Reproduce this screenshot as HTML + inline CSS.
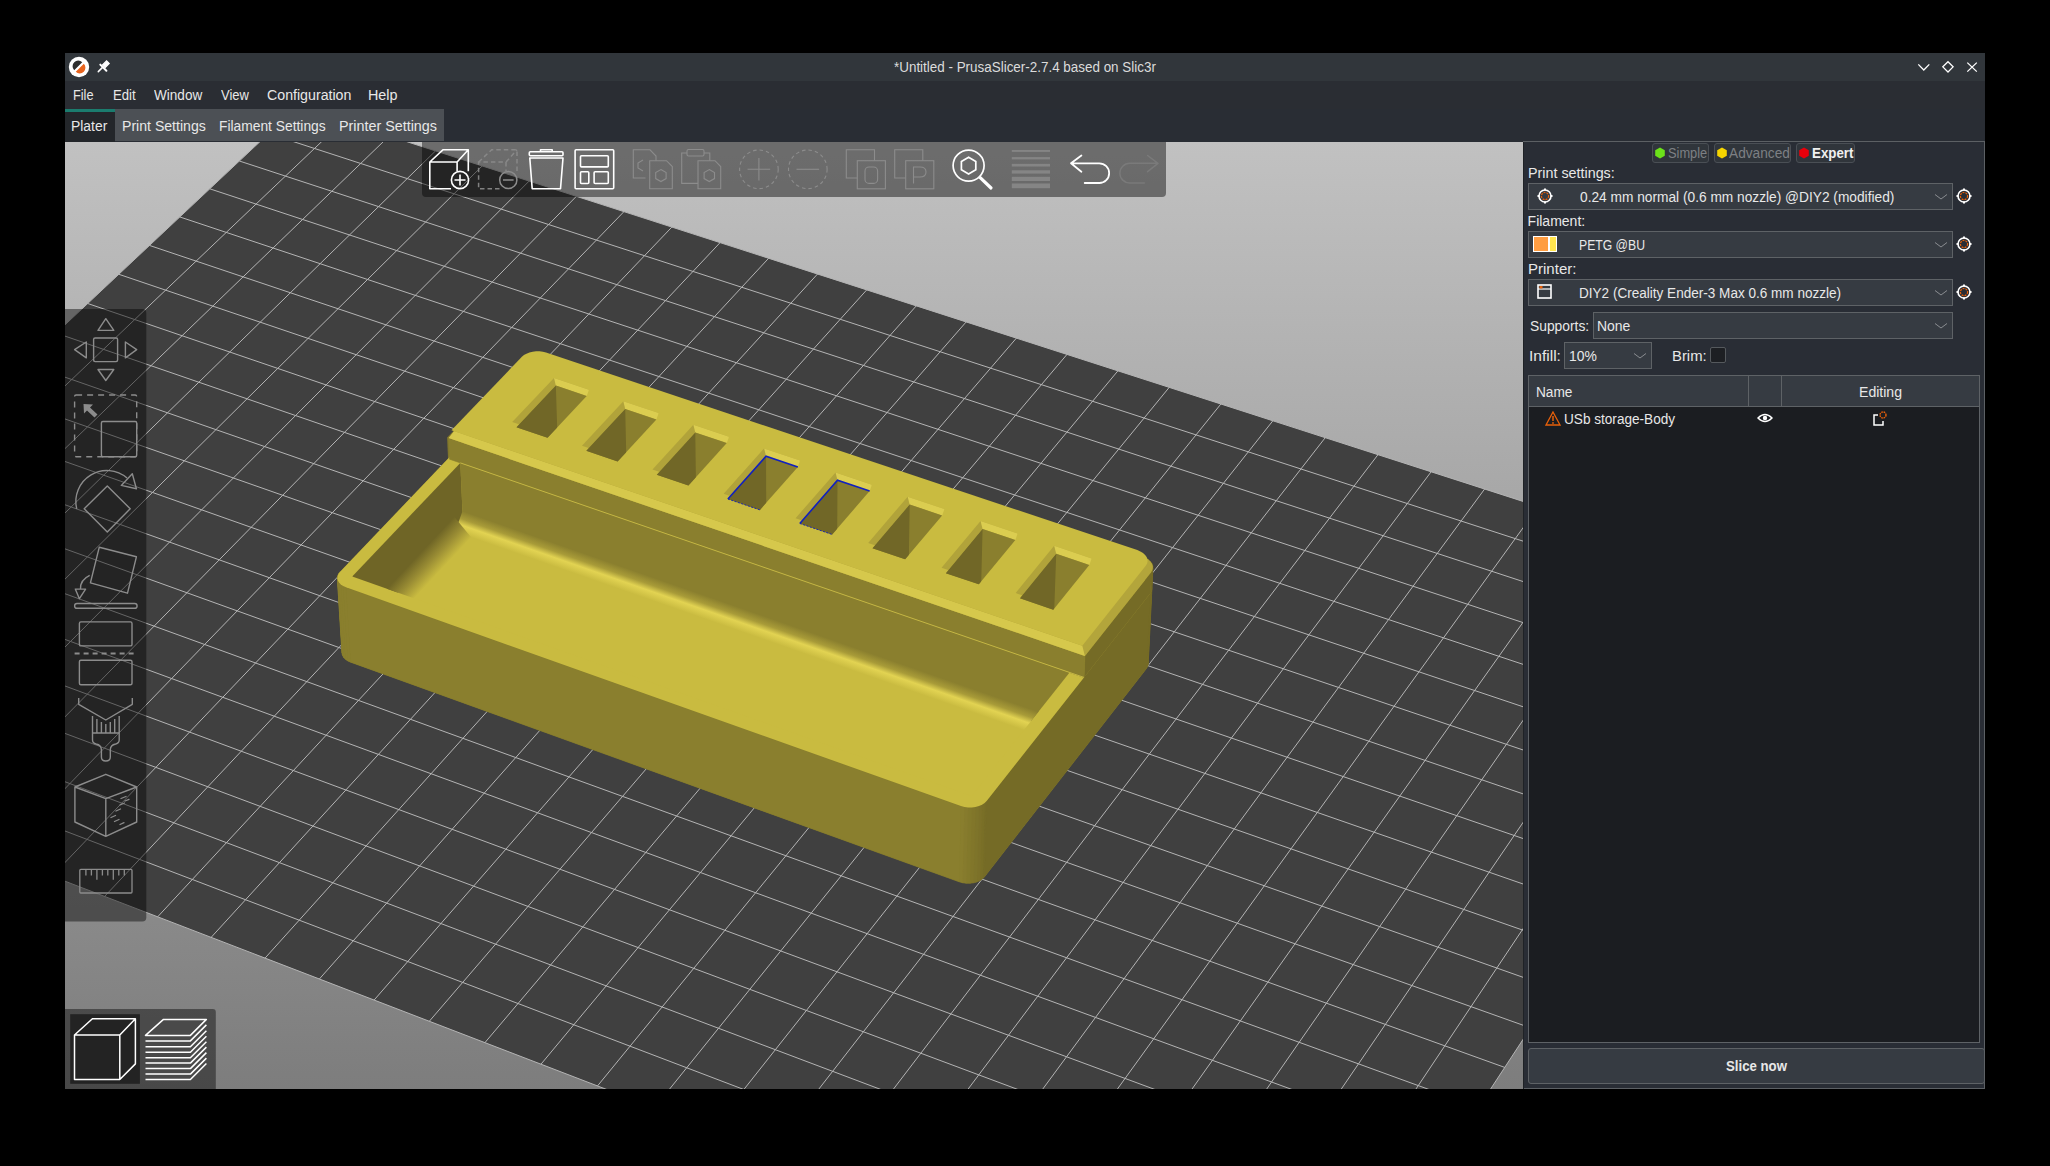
<!DOCTYPE html>
<html><head><meta charset="utf-8">
<style>
*{margin:0;padding:0;box-sizing:border-box}
html,body{width:2050px;height:1166px;background:#000;overflow:hidden;font-family:"Liberation Sans",sans-serif}
.r{position:absolute}
.t{position:absolute;white-space:nowrap}
</style></head><body>
<div class="r" style="left:65px;top:53px;width:1920px;height:28px;background:#31363b;"></div>
<div class="r" style="left:65px;top:81px;width:1920px;height:28px;background:#2a2d33;"></div>
<div class="r" style="left:65px;top:109px;width:1920px;height:33px;background:#292d34;"></div>
<div class="r" style="left:65px;top:109px;width:50px;height:3px;background:#1b7c6e;"></div>
<div class="r" style="left:65px;top:112px;width:50px;height:30px;background:#23262a;"></div>
<div class="r" style="left:115px;top:109px;width:329px;height:32px;background:#4c5055;"></div>
<div class="r" style="left:1523px;top:141px;width:462px;height:948px;background:#292d35;"></div>
<div class="r" style="left:1523px;top:141px;width:462px;height:1px;background:#5c6064;"></div>
<div class="r" style="left:1984px;top:141px;width:1px;height:948px;background:#5c6064;"></div>
<div class="r" style="left:1523px;top:1088px;width:462px;height:1px;background:#5c6064;"></div>
<div class="r" style="left:1523px;top:142px;width:1px;height:947px;background:#1f2226;"></div>
<div class="r" style="left:65px;top:142px;width:1458px;height:947px;overflow:hidden;background:linear-gradient(#c1c1c1,#7d7d7d)">
<svg width="1458" height="947" style="position:absolute;left:0;top:0">
<polygon points="232.47,-35.59 1748.82,453.13 1247.65,1218.91 -420.23,577.61" fill="#404040"/>
<path d="M232.47 -35.59L-420.23 577.61M278.19 -20.86L-370.67 596.67M324.21 -6.03L-320.73 615.87M370.54 8.91L-270.42 635.21M417.18 23.94L-219.73 654.70M464.12 39.07L-168.66 674.34M511.38 54.30L-117.19 694.13M558.96 69.64L-65.33 714.07M606.86 85.07L-13.07 734.17M655.09 100.62L39.59 754.41M703.64 116.26L92.66 774.82M752.52 132.02L146.14 795.38M801.73 147.88L200.04 816.11M851.28 163.85L254.37 837.00M901.17 179.93L309.12 858.05M951.41 196.12L364.30 879.27M1001.99 212.42L419.92 900.65M1052.93 228.84L475.98 922.21M1104.22 245.37L532.49 943.94M1155.87 262.02L589.46 965.84M1207.88 278.78L646.88 987.92M1260.26 295.66L704.77 1010.18M1313.01 312.66L763.13 1032.62M1366.13 329.79L821.97 1055.24M1419.64 347.03L881.29 1078.05M1473.52 364.40L941.09 1101.04M1527.79 381.89L1001.39 1124.23M1582.45 399.51L1062.19 1147.60M1637.51 417.25L1123.49 1171.18M1692.96 435.12L1185.31 1194.95M1748.82 453.13L1247.65 1218.91M232.47 -35.59L1748.82 453.13M203.59 -8.46L1726.96 486.52M174.36 19.00L1704.81 520.38M144.77 46.80L1682.35 554.69M114.81 74.94L1659.59 589.47M84.49 103.43L1636.51 624.73M53.78 132.28L1613.11 660.49M22.69 161.49L1589.39 696.74M-8.79 191.07L1565.32 733.51M-40.68 221.03L1540.92 770.80M-72.97 251.37L1516.17 808.62M-105.68 282.10L1491.06 846.99M-138.82 313.23L1465.58 885.91M-172.39 344.77L1439.74 925.41M-206.40 376.72L1413.51 965.48M-240.86 409.09L1386.89 1006.15M-275.77 441.90L1359.88 1047.43M-311.16 475.14L1332.45 1089.34M-347.03 508.84L1304.61 1131.87M-383.38 542.99L1276.35 1175.06M-420.23 577.61L1247.65 1218.91" stroke="#b4b4b4" stroke-width="1.0" fill="none"/>
<polygon points="272.37,436.19 272.61,433.93 273.54,431.71 275.12,429.63 456.30,240.05 458.33,238.32 460.86,236.86 463.80,235.71 467.03,234.93 470.43,234.54 473.87,234.56 477.21,234.98 480.33,235.79 1076.57,436.03 1079.62,437.30 1082.25,438.92 1084.35,440.81 1085.85,442.91 1086.68,445.14 1086.82,447.42 1083.18,522.30 1082.62,524.54 1081.38,526.64 919.61,734.75 917.61,736.81 915.03,738.55 911.97,739.91 908.57,740.85 904.94,741.31 901.23,741.29 897.58,740.79 894.14,739.82 285.57,520.17 282.74,518.89 280.39,517.26 278.61,515.36 277.47,513.25 277.01,511.02" fill="#7f752b"/>
<polygon points="382.08,295.54 455.54,219.03 457.58,217.30 460.12,215.84 463.07,214.70 466.30,213.92 469.71,213.53 473.16,213.55 476.51,213.97 479.64,214.78 1077.57,414.71 1080.63,415.98 1083.27,417.59 1085.38,419.48 1086.88,421.58 1087.72,423.81 1087.86,426.08 1086.82,447.42 1086.25,449.64 1085.00,451.74 1019.04,535.41 383.06,316.68" fill="#7f752b"/>
<polygon points="1073.04,510.86 1076.07,512.14 1079.62,437.30 1076.57,436.03" fill="#756b26" stroke="#756b26" stroke-width="0.6"/>
<polygon points="1076.07,512.14 1078.67,513.76 1082.25,438.92 1079.62,437.30" fill="#756b26" stroke="#756b26" stroke-width="0.6"/>
<polygon points="1078.67,513.76 1080.75,515.66 1084.35,440.81 1082.25,438.92" fill="#756b26" stroke="#756b26" stroke-width="0.6"/>
<polygon points="1080.75,515.66 1082.23,517.78 1085.85,442.91 1084.35,440.81" fill="#756b26" stroke="#756b26" stroke-width="0.6"/>
<polygon points="1082.23,517.78 1083.05,520.02 1086.68,445.14 1085.85,442.91" fill="#756b26" stroke="#756b26" stroke-width="0.6"/>
<polygon points="1083.05,520.02 1083.18,522.30 1086.82,447.42 1086.68,445.14" fill="#756b26" stroke="#756b26" stroke-width="0.6"/>
<polygon points="1083.18,522.30 1082.62,524.54 1086.25,449.64 1086.82,447.42" fill="#756b26" stroke="#756b26" stroke-width="0.6"/>
<polygon points="1082.62,524.54 1081.38,526.64 1085.00,451.74 1086.25,449.64" fill="#756b26" stroke="#756b26" stroke-width="0.6"/>
<polygon points="1081.38,526.64 919.61,734.75 921.65,658.96 1085.00,451.74" fill="#756b26" stroke="#756b26" stroke-width="0.6"/>
<polygon points="919.61,734.75 917.61,736.81 919.62,661.00 921.65,658.96" fill="#766c27" stroke="#766c27" stroke-width="0.6"/>
<polygon points="917.61,736.81 915.03,738.55 917.02,662.74 919.62,661.00" fill="#796f27" stroke="#796f27" stroke-width="0.6"/>
<polygon points="915.03,738.55 911.97,739.91 913.93,664.09 917.02,662.74" fill="#7c7129" stroke="#7c7129" stroke-width="0.6"/>
<polygon points="911.97,739.91 908.57,740.85 910.49,665.02 913.93,664.09" fill="#7e742a" stroke="#7e742a" stroke-width="0.6"/>
<polygon points="908.57,740.85 904.94,741.31 906.82,665.49 910.49,665.02" fill="#81762a" stroke="#81762a" stroke-width="0.6"/>
<polygon points="904.94,741.31 901.23,741.29 903.07,665.47 906.82,665.49" fill="#83792b" stroke="#83792b" stroke-width="0.6"/>
<polygon points="901.23,741.29 897.58,740.79 899.39,664.97 903.07,665.47" fill="#867b2d" stroke="#867b2d" stroke-width="0.6"/>
<polygon points="897.58,740.79 894.14,739.82 895.90,664.00 899.39,664.97" fill="#897e2e" stroke="#897e2e" stroke-width="0.6"/>
<polygon points="894.14,739.82 285.57,520.17 281.00,445.30 895.90,664.00" fill="#8a7f2e" stroke="#8a7f2e" stroke-width="0.6"/>
<polygon points="285.57,520.17 282.74,518.89 278.15,444.02 281.00,445.30" fill="#8a7f2e" stroke="#8a7f2e" stroke-width="0.6"/>
<polygon points="282.74,518.89 280.39,517.26 275.78,442.41 278.15,444.02" fill="#8a7f2e" stroke="#8a7f2e" stroke-width="0.6"/>
<polygon points="280.39,517.26 278.61,515.36 273.99,440.51 275.78,442.41" fill="#8a7f2e" stroke="#8a7f2e" stroke-width="0.6"/>
<polygon points="278.61,515.36 277.47,513.25 272.83,438.41 273.99,440.51" fill="#8a7f2e" stroke="#8a7f2e" stroke-width="0.6"/>
<polygon points="277.47,513.25 277.01,511.02 272.37,436.19 272.83,438.41" fill="#8a7f2e" stroke="#8a7f2e" stroke-width="0.6"/>
<polygon points="277.01,511.02 277.24,508.74 272.61,433.93 272.37,436.19" fill="#8a7f2e" stroke="#8a7f2e" stroke-width="0.6"/>
<polygon points="277.24,508.74 278.16,506.52 273.54,431.71 272.61,433.93" fill="#8a7f2e" stroke="#8a7f2e" stroke-width="0.6"/>
<polygon points="278.16,506.52 279.73,504.43 275.12,429.63 273.54,431.71" fill="#8a7f2e" stroke="#8a7f2e" stroke-width="0.6"/>
<polygon points="456.30,240.05 458.33,238.32 460.86,236.86 463.80,235.71 467.03,234.93 470.43,234.54 473.87,234.56 477.21,234.98 480.33,235.79 1076.57,436.03 1079.62,437.30 1082.25,438.92 1084.35,440.81 1085.85,442.91 1086.68,445.14 1086.82,447.42 1086.25,449.64 1085.00,451.74 921.65,658.96 919.62,661.00 917.02,662.74 913.93,664.09 910.49,665.02 906.82,665.49 903.07,665.47 899.39,664.97 895.90,664.00 281.00,445.30 278.15,444.02 275.78,442.41 273.99,440.51 272.83,438.41 272.37,436.19 272.61,433.93 273.54,431.71 275.12,429.63" fill="#c9bb40"/>
<clipPath id="pk"><polygon points="395.30,320.89 1004.58,530.44 906.64,654.10 287.23,434.38"/></clipPath>
<polygon points="395.30,320.89 1004.58,530.44 906.64,654.10 287.23,434.38" fill="#c9bb40"/>
<linearGradient id="fb" gradientUnits="userSpaceOnUse" x1="700.09" y1="474.43" x2="692.78" y2="495.39"><stop offset="0" stop-color="#8a7f2e"/><stop offset="0.35" stop-color="#a89b38"/><stop offset="0.62" stop-color="#e2d352"/><stop offset="1" stop-color="#c9bb40"/></linearGradient>
<linearGradient id="fl" gradientUnits="userSpaceOnUse" x1="339.69" y1="427.68" x2="359.13" y2="445.86"><stop offset="0" stop-color="#6f6526"/><stop offset="0.5" stop-color="#9a8d34"/><stop offset="1" stop-color="#c9bb40"/></linearGradient>
<g clip-path="url(#pk)">
<polygon points="398.00,381.33 1002.26,591.71 1004.76,525.68 395.09,316.20" fill="#8a7f2e"/>
<polygon points="398.00,381.33 290.89,495.29 286.95,429.65 395.09,316.20" fill="#6f6526"/>
<polygon points="397.46,369.32 1002.72,579.54 995.08,600.88 390.07,389.76" fill="url(#fb)"/>
<polygon points="389.40,374.97 289.99,480.39 307.36,501.20 406.32,395.43" fill="url(#fl)"/>
</g>
<polygon points="1076.57,436.03 1079.62,437.30 1080.63,415.98 1077.57,414.71" fill="#756b26" stroke="#756b26" stroke-width="0.6"/>
<polygon points="1079.62,437.30 1082.25,438.92 1083.27,417.59 1080.63,415.98" fill="#756b26" stroke="#756b26" stroke-width="0.6"/>
<polygon points="1082.25,438.92 1084.35,440.81 1085.38,419.48 1083.27,417.59" fill="#756b26" stroke="#756b26" stroke-width="0.6"/>
<polygon points="1084.35,440.81 1085.85,442.91 1086.88,421.58 1085.38,419.48" fill="#756b26" stroke="#756b26" stroke-width="0.6"/>
<polygon points="1085.85,442.91 1086.68,445.14 1087.72,423.81 1086.88,421.58" fill="#756b26" stroke="#756b26" stroke-width="0.6"/>
<polygon points="1086.68,445.14 1086.82,447.42 1087.86,426.08 1087.72,423.81" fill="#756b26" stroke="#756b26" stroke-width="0.6"/>
<polygon points="1086.82,447.42 1086.25,449.64 1087.29,428.30 1087.86,426.08" fill="#756b26" stroke="#756b26" stroke-width="0.6"/>
<polygon points="1086.25,449.64 1085.00,451.74 1086.03,430.39 1087.29,428.30" fill="#756b26" stroke="#756b26" stroke-width="0.6"/>
<polygon points="1085.00,451.74 1019.04,535.41 1019.89,513.95 1086.03,430.39" fill="#756b26" stroke="#756b26" stroke-width="0.6"/>
<polygon points="1019.04,535.41 384.59,317.21 383.62,296.06 1019.89,513.95" fill="#8a7f2e" stroke="#8a7f2e" stroke-width="0.6"/>
<polygon points="457.05,219.53 459.09,217.81 461.63,216.35 464.58,215.21 467.82,214.43 471.23,214.04 474.67,214.05 478.03,214.47 481.16,215.29 1077.57,414.71 1080.63,415.98 1083.27,417.59 1085.38,419.48 1086.88,421.58 1087.72,423.81 1087.86,426.08 1087.29,428.30 1086.03,430.39 1019.89,513.95 383.62,296.06" fill="#b3a53b"/>
<polygon points="383.62,296.06 1019.89,513.95 1017.28,503.75 389.04,289.01" fill="#d6c84c"/>
<polygon points="456.89,214.85 458.93,213.12 461.47,211.66 464.42,210.52 467.66,209.74 471.07,209.35 474.52,209.37 477.87,209.79 481.01,210.60 1072.30,408.12 1075.36,409.39 1078.00,411.00 1080.10,412.89 1081.61,414.98 1082.44,417.21 1082.57,419.47 1082.00,421.70 1080.74,423.79 1017.28,503.75 386.48,288.14" fill="#c9bb40"/>
<line x1="395.30" y1="320.89" x2="1019.04" y2="535.41" stroke="#c3b544" stroke-width="1"/>
<polygon points="489.02,235.93 523.99,247.67 482.40,291.92 447.21,279.97" fill="#b1a33a"/>
<polygon points="489.02,235.93 523.99,247.67 521.72,253.96 490.83,243.57" fill="#dbcd50"/>
<clipPath id="s0"><polygon points="490.83,243.57 521.72,253.96 482.52,295.70 451.45,285.13"/></clipPath>
<polygon points="490.83,243.57 521.72,253.96 482.52,295.70 451.45,285.13" fill="#8a7f2e"/>
<g clip-path="url(#s0)">
<polygon points="490.83,243.57 451.45,285.13 456.44,420.18 495.08,378.22" fill="#716727"/>
</g>
<polygon points="558.37,259.21 593.68,271.06 552.54,315.75 516.99,303.68" fill="#b1a33a"/>
<polygon points="558.37,259.21 593.68,271.06 591.41,277.38 560.21,266.89" fill="#dbcd50"/>
<clipPath id="s1"><polygon points="560.21,266.89 591.41,277.38 552.63,319.53 521.24,308.86"/></clipPath>
<polygon points="560.21,266.89 591.41,277.38 552.63,319.53 521.24,308.86" fill="#8a7f2e"/>
<g clip-path="url(#s1)">
<polygon points="560.21,266.89 521.24,308.86 525.00,444.14 563.24,401.77" fill="#716727"/>
</g>
<polygon points="628.40,282.72 664.06,294.69 623.37,339.82 587.48,327.62" fill="#b1a33a"/>
<polygon points="628.40,282.72 664.06,294.69 661.78,301.04 630.27,290.44" fill="#dbcd50"/>
<clipPath id="s2"><polygon points="630.27,290.44 661.78,301.04 623.43,343.61 591.73,332.83"/></clipPath>
<polygon points="630.27,290.44 661.78,301.04 623.43,343.61 591.73,332.83" fill="#8a7f2e"/>
<g clip-path="url(#s2)">
<polygon points="630.27,290.44 591.73,332.83 594.23,468.34 632.05,425.55" fill="#716727"/>
</g>
<polygon points="699.12,306.45 735.14,318.54 694.92,364.13 658.66,351.81" fill="#b1a33a"/>
<polygon points="699.12,306.45 735.14,318.54 732.85,324.93 701.03,314.23" fill="#dbcd50"/>
<clipPath id="s3"><polygon points="701.03,314.23 732.85,324.93 694.94,367.92 662.92,357.03"/></clipPath>
<polygon points="701.03,314.23 732.85,324.93 694.94,367.92 662.92,357.03" fill="#8a7f2e"/>
<g clip-path="url(#s3)">
<polygon points="701.03,314.23 662.92,357.03 664.13,492.77 701.54,449.56" fill="#716727"/>
</g>
<polyline points="732.85,324.93 701.03,314.23 662.92,357.03" fill="none" stroke="#1020c0" stroke-width="1.6"/>
<line x1="662.92" y1="357.03" x2="694.94" y2="367.92" stroke="#1020c0" stroke-width="0.9" stroke-dasharray="2,1.5"/>
<polygon points="770.55,330.43 806.93,342.64 767.19,388.68 730.56,376.24" fill="#b1a33a"/>
<polygon points="770.55,330.43 806.93,342.64 804.63,349.05 772.49,338.25" fill="#dbcd50"/>
<clipPath id="s4"><polygon points="772.49,338.25 804.63,349.05 767.17,392.48 734.83,381.48"/></clipPath>
<polygon points="772.49,338.25 804.63,349.05 767.17,392.48 734.83,381.48" fill="#8a7f2e"/>
<g clip-path="url(#s4)">
<polygon points="772.49,338.25 734.83,381.48 734.73,517.44 771.71,473.81" fill="#716727"/>
</g>
<polyline points="804.63,349.05 772.49,338.25 734.83,381.48" fill="none" stroke="#1020c0" stroke-width="1.6"/>
<line x1="734.83" y1="381.48" x2="767.17" y2="392.48" stroke="#1020c0" stroke-width="0.9" stroke-dasharray="2,1.5"/>
<polygon points="842.69,354.64 879.44,366.98 840.18,413.48 803.19,400.91" fill="#b1a33a"/>
<polygon points="842.69,354.64 879.44,366.98 877.13,373.42 844.67,362.51" fill="#dbcd50"/>
<clipPath id="s5"><polygon points="844.67,362.51 877.13,373.42 840.13,417.29 807.46,406.18"/></clipPath>
<polygon points="844.67,362.51 877.13,373.42 840.13,417.29 807.46,406.18" fill="#8a7f2e"/>
<g clip-path="url(#s5)">
<polygon points="844.67,362.51 807.46,406.18 806.03,542.35 842.57,498.29" fill="#716727"/>
</g>
<polygon points="915.56,379.10 952.68,391.56 913.92,438.54 876.55,425.84" fill="#b1a33a"/>
<polygon points="915.56,379.10 952.68,391.56 950.35,398.04 917.57,387.02" fill="#dbcd50"/>
<clipPath id="s6"><polygon points="917.57,387.02 950.35,398.04 913.83,442.35 880.83,431.13"/></clipPath>
<polygon points="917.57,387.02 950.35,398.04 913.83,442.35 880.83,431.13" fill="#8a7f2e"/>
<g clip-path="url(#s6)">
<polygon points="917.57,387.02 880.83,431.13 878.03,567.52 914.12,523.02" fill="#716727"/>
</g>
<polygon points="989.17,403.81 1026.66,416.39 988.42,463.85 950.66,451.02" fill="#b1a33a"/>
<polygon points="989.17,403.81 1026.66,416.39 1024.32,422.90 991.21,411.77" fill="#dbcd50"/>
<clipPath id="s7"><polygon points="991.21,411.77 1024.32,422.90 988.28,467.67 954.95,456.33"/></clipPath>
<polygon points="991.21,411.77 1024.32,422.90 988.28,467.67 954.95,456.33" fill="#8a7f2e"/>
<g clip-path="url(#s7)">
<polygon points="991.21,411.77 954.95,456.33 950.76,592.93 986.39,547.99" fill="#716727"/>
</g>
</svg></div>
<svg class="r" style="left:0;top:0" width="2050" height="1166"><path d="M422,142 H1166 V193 Q1166,197 1162,197 H426 Q422,197 422,193 Z" fill="#000" fill-opacity="0.44"/>
<g fill="none" stroke="#ffffff" stroke-width="1.6" stroke-linejoin="round">
<path d="M451,188.8 H429.8 V162 H457.1 V171 M429.8,162 L442.9,149.8 H468.3 V171.3 M457.1,162 L468.3,149.8"/>
<circle cx="460" cy="180" r="8.6"/><path d="M460,174.5 V185.5 M454.5,180 H465.5"/></g>
<g fill="none" stroke="#8c8c8c" stroke-width="1.5" stroke-dasharray="4.5,3" stroke-opacity="0.9">
<path d="M499.5,188.8 H478.6 V162 H506 V171 M478.6,162 L491.7,149.8 H517 V171.3 M506,162 L517,149.8"/></g>
<g fill="none" stroke="#8c8c8c" stroke-width="1.5"><circle cx="508.3" cy="180" r="8.6"/><path d="M503,180 H513.6"/></g>
<g fill="none" stroke="#ffffff" stroke-width="1.6" stroke-linejoin="round">
<rect x="529.3" y="151.8" width="33.7" height="3.9" rx="1"/><path d="M540.5,151.8 V149.8 H552.2 V151.8"/><path d="M529.8,158 H563 L560.5,188.8 H532.2 Z"/></g>
<g fill="none" stroke="#ffffff" stroke-width="1.6">
<rect x="575.1" y="149.8" width="38.6" height="39" rx="1"/><rect x="580.5" y="155.7" width="27.8" height="11.2" rx="1"/><rect x="580.5" y="171.8" width="8.3" height="11.7" rx="1"/><rect x="594.1" y="171.8" width="14.2" height="11.7" rx="1"/></g>
<g fill="none" stroke="#8c8c8c" stroke-width="1.1">
<path d="M645.5,178 H633.3 V149.8 H650 L656,156 V160.7"/><path d="M649.7,188.8 V160.7 H666.5 L672.3,166.5 V188.8 Z"/><polygon points="660.9,169.6 666.1,172.6 666.1,178.6 660.9,181.6 655.7,178.6 655.7,172.6"/>
<path d="M643,160 L638,163 V168 L643,171"/>
<path d="M698,183.4 H681.7 V153 H687 M704,153 H709.8 V160.7"/><rect x="687" y="149.5" width="17" height="6.5" rx="1.5"/><path d="M698,188.8 V160.7 H715 L720.7,166.5 V188.8 Z"/><polygon points="709.3,169.6 714.5,172.6 714.5,178.6 709.3,181.6 704.1,178.6 704.1,172.6"/>
<circle cx="758.9" cy="169.3" r="19.3" stroke-dasharray="3.5,3"/><path d="M758.9,158 V180.6 M747.6,169.3 H770.2"/>
<circle cx="807.8" cy="169.3" r="19.3" stroke-dasharray="3.5,3"/><path d="M796.5,169.3 H819.1"/>
<path d="M857.3,178 H846.3 V149.8 H874.5 V160.7"/><rect x="857.3" y="160.7" width="28.1" height="28.1"/><rect x="865" y="167" width="12.6" height="16.4" rx="4"/>
<path d="M905.7,178 H894.7 V149.8 H922.8 V160.7"/><rect x="905.7" y="160.7" width="28.1" height="28.1"/><path d="M913.5,183.5 V167 H920 Q926,167 926,172 Q926,177 920,177 H913.5"/>
</g>
<g fill="none" stroke="#ffffff" stroke-width="1.7"><circle cx="968.6" cy="165.6" r="15.5"/><polygon points="968.6,157.2 975.8,161.4 975.8,169.8 968.6,174 961.4,169.8 961.4,161.4"/></g>
<path d="M980.2,177.6 L991,188" stroke="#ffffff" stroke-width="3.2" stroke-linecap="round"/>
<rect x="1011.8" y="150.0" width="38.2" height="1.9" fill="#858585"/>
<rect x="1011.8" y="157.1" width="38.2" height="2.3" fill="#858585"/>
<rect x="1011.8" y="163.9" width="38.2" height="2.6" fill="#858585"/>
<rect x="1011.8" y="170.3" width="38.2" height="3.3" fill="#858585"/>
<rect x="1011.8" y="176.8" width="38.2" height="4.2" fill="#858585"/>
<rect x="1011.8" y="183.5" width="38.2" height="4.7" fill="#858585"/>
<path d="M1081.4,155.5 L1071,163.3 L1081.4,171.7 M1071.5,163.3 H1099.3 A9.85,9.85 0 0 1 1099.3,183 H1084.7" fill="none" stroke="#ffffff" stroke-width="1.8" stroke-linecap="round" stroke-linejoin="round"/>
<path d="M1147.6,155.5 L1158,163.3 L1147.6,171.7 M1157.5,163.3 H1129.7 A9.85,9.85 0 0 0 1129.7,183 H1144.3" fill="none" stroke="#7a7a7a" stroke-width="1.5" stroke-linecap="round" stroke-linejoin="round"/>
<path d="M65,309 H142.3 Q146.3,309 146.3,313 V917.5 Q146.3,921.5 142.3,921.5 H65 Z" fill="#000" fill-opacity="0.44"/>
<g fill="none" stroke="#8c8c8c" stroke-width="1.4" stroke-linejoin="round">
<polygon points="105.8,318.7 113.8,330.4 98,330.4"/><polygon points="74.6,349.6 86.3,342 86.3,357.9"/><polygon points="136.7,349.6 125.4,342 125.4,357.9"/><polygon points="105.8,380.5 113.8,369.5 98,369.5"/><rect x="93.6" y="338" width="24" height="23.6" rx="1.5"/>
<rect x="74.6" y="395" width="62.1" height="61.7" rx="1.5" stroke-dasharray="6,5"/><rect x="101.4" y="421.5" width="35.3" height="35.2" rx="1.5"/>
</g>
<path d="M83.5,403.9 L93,404.5 L90,407.5 L97.5,414.5 L94.5,417.5 L87,410.5 L84,413.5 Z" fill="#8c8c8c"/>
<g fill="none" stroke="#8c8c8c" stroke-width="1.4" stroke-linejoin="round">
<path d="M76.7,508.8 A31,31 0 0 1 127,478"/><polygon points="132.3,473.7 121.3,485.4 136.4,488.8"/><polygon points="107.3,486.1 130.2,508.8 107.3,532.1 84.2,508.8"/>
<polygon points="99.3,547.2 136.4,556.8 127.5,593.2 90.4,582.9"/><path d="M89.7,575.4 Q80,580 80.5,589"/><polygon points="75.3,589.1 85.6,589.1 79.4,598.7"/><rect x="74.6" y="603.5" width="62.5" height="4.8" rx="2.4"/>
<rect x="79.4" y="621.9" width="52.6" height="24" rx="1.5"/><path d="M74.6,653.5 H136.4" stroke-dasharray="5,4" stroke-width="2"/><rect x="79.4" y="660.3" width="52.6" height="24.5" rx="1.5"/>
<path d="M78.7,698.1 V704.3 L105.8,720 L132.3,704.3 V698.1"/><path d="M92.5,716 V740 Q92.5,743 96,744 Q101.4,745 101.4,750 V757 Q101.4,761 105.8,761 Q110.3,761 110.3,757 V750 Q110.3,745 115.7,744 Q119.2,743 119.2,740 V716 M92.5,733 H119.2"/>
<path d="M96.9,719 V733 M101.4,722 V733 M105.8,724 V733 M110.3,722 V733 M114.7,719 V733"/>
<path d="M105.8,774.3 L136.7,787 V822 L105.8,836.4 L74.9,822 V787 Z M74.9,787 L105.8,798.6 L136.7,787 M105.8,798.6 V836.4"/>
</g>
<g stroke="#8c8c8c" stroke-width="1.3" stroke-linecap="round"><path d="M121,798.5 L126,796.5 M125,801 L129,799.3 M120,805 L124.5,803 M116,811 L120.5,809 M111,817.5 L115.5,815.5 M114.5,821.5 L119,819.5 M120,824.5 L124,822.7"/></g>
<g fill="none" stroke="#8c8c8c" stroke-width="1.3"><rect x="79.8" y="869.4" width="52.2" height="23.6" rx="1"/>
<path d="M85.9,870 V875.5 M91.4,870 V875.5 M96.9,870 V879.7 M102.4,870 V875.5 M107.8,870 V875.5 M113.3,870 V879.7 M118.8,870 V875.5 M124.3,870 V875.5"/></g>
<path d="M65,1009 H212.8 Q215.8,1009 215.8,1012 V1089 H65 Z" fill="#1e1e1e" fill-opacity="0.55"/>
<rect x="70.2" y="1014.2" width="69.7" height="69.6" fill="#232323"/>
<g fill="none" stroke="#fff" stroke-width="1.5" stroke-linejoin="round"><path d="M74.5,1035 H119.8 V1079.5 H74.5 Z M74.5,1035 L92.4,1018.7 H135.4 L119.8,1035 M135.4,1018.7 V1063.9 L119.8,1079.5"/>
<path d="M145.5,1035.4 L163.5,1019.4 H206.4 L190.4,1035.4 Z"/>
<path d="M145.5,1040.9 H190.4 L206.4,1024.9"/>
<path d="M145.5,1046.8 H190.4 L206.4,1030.8"/>
<path d="M145.5,1052.2 H190.4 L206.4,1036.2"/>
<path d="M145.5,1057.7 H190.4 L206.4,1041.7"/>
<path d="M145.5,1063.1 H190.4 L206.4,1047.1"/>
<path d="M145.5,1068.6 H190.4 L206.4,1052.6"/>
<path d="M145.5,1074.1 H190.4 L206.4,1058.1"/>
<path d="M145.5,1079.5 H190.4 L206.4,1063.5"/>
</g>
<circle cx="79" cy="67" r="10.2" fill="#fff"/>
<path d="M74.17,70.23 A5.70,5.70 0 0 1 82.23,62.17 Z" fill="#2e2e2e"/>
<path d="M83.83,63.77 A5.70,5.70 0 0 1 75.77,71.83 Z" fill="#e8641e"/>
<g fill="#fff" stroke="#fff" stroke-linecap="round"><path d="M98.3,71.6 L102.8,67.1" stroke-width="1.5"/><path d="M100.3,64.6 L106.4,70.7" stroke-width="2"/><path d="M102.5,65 L106.6,60.9 L109.2,63.5 L105.1,67.6 Z" stroke-width="1.2"/></g>
<path d="M1918.3,64.4 L1923.8,70 L1929.3,64.4" fill="none" stroke="#fff" stroke-width="1.3"/>
<polygon points="1948,61.7 1953.1,66.85 1948,72 1942.8,66.85" fill="none" stroke="#fff" stroke-width="1.3"/>
<path d="M1967.3,62.6 L1976.8,71.6 M1976.8,62.6 L1967.3,71.6" fill="none" stroke="#fff" stroke-width="1.3"/></svg><div class="r" style="left:1652px;top:143px;width:57px;height:20px;border:1px solid #4a4f55;border-radius:3px;background:#30353b"></div>
<svg class="r" style="left:1654px;top:147px" width="12" height="12"><polygon points="6,0.5 10.8,3.2 10.8,8.8 6,11.5 1.2,8.8 1.2,3.2" fill="#6be21a"/></svg>
<div class="r" style="left:1714px;top:143px;width:77px;height:20px;border:1px solid #4a4f55;border-radius:3px;background:#30353b"></div>
<svg class="r" style="left:1716px;top:147px" width="12" height="12"><polygon points="6,0.5 10.8,3.2 10.8,8.8 6,11.5 1.2,8.8 1.2,3.2" fill="#f5d400"/></svg>
<div class="r" style="left:1796px;top:143px;width:59px;height:20px;border:1px solid #4a4f55;border-radius:3px;background:#30353b"></div>
<svg class="r" style="left:1798px;top:147px" width="12" height="12"><polygon points="6,0.5 10.8,3.2 10.8,8.8 6,11.5 1.2,8.8 1.2,3.2" fill="#e8000b"/></svg>
<div class="r" style="left:1528px;top:183px;width:425px;height:27px;background:#363b42;border:1px solid #5e6266"></div>
<svg class="r" style="left:1934px;top:192.5px" width="14" height="8"><polyline points="1,1.5 7,6 13,1.5" fill="none" stroke="#8a8d91" stroke-width="1"/></svg>
<div class="r" style="left:1528px;top:231px;width:425px;height:27px;background:#363b42;border:1px solid #5e6266"></div>
<svg class="r" style="left:1934px;top:240.5px" width="14" height="8"><polyline points="1,1.5 7,6 13,1.5" fill="none" stroke="#8a8d91" stroke-width="1"/></svg>
<div class="r" style="left:1528px;top:279px;width:425px;height:27px;background:#363b42;border:1px solid #5e6266"></div>
<svg class="r" style="left:1934px;top:288.5px" width="14" height="8"><polyline points="1,1.5 7,6 13,1.5" fill="none" stroke="#8a8d91" stroke-width="1"/></svg>
<div class="r" style="left:1593px;top:312px;width:360px;height:27px;background:#363b42;border:1px solid #5e6266"></div>
<svg class="r" style="left:1934px;top:321.5px" width="14" height="8"><polyline points="1,1.5 7,6 13,1.5" fill="none" stroke="#8a8d91" stroke-width="1"/></svg>
<div class="r" style="left:1564px;top:342px;width:88px;height:27px;background:#363b42;border:1px solid #5e6266"></div>
<svg class="r" style="left:1633px;top:351.5px" width="14" height="8"><polyline points="1,1.5 7,6 13,1.5" fill="none" stroke="#8a8d91" stroke-width="1"/></svg>
<svg class="r" style="left:1537px;top:188px" width="16" height="16"><circle cx="8" cy="8" r="6" fill="none" stroke="#fff" stroke-width="1.6"/><circle cx="8" cy="8" r="3.6" fill="none" stroke="#e8600a" stroke-width="1.2" stroke-dasharray="2,1"/><rect x="7" y="0.5" width="2" height="2" fill="#fff"/><rect x="7" y="13.5" width="2" height="2" fill="#fff"/><rect x="0.5" y="7" width="2" height="2" fill="#fff"/><rect x="13.5" y="7" width="2" height="2" fill="#fff"/></svg>
<svg class="r" style="left:1956px;top:188px" width="16" height="16"><circle cx="8" cy="8" r="6" fill="none" stroke="#fff" stroke-width="1.6"/><circle cx="8" cy="8" r="3.6" fill="none" stroke="#e8600a" stroke-width="1.2" stroke-dasharray="2,1"/><rect x="7" y="0.5" width="2" height="2" fill="#fff"/><rect x="7" y="13.5" width="2" height="2" fill="#fff"/><rect x="0.5" y="7" width="2" height="2" fill="#fff"/><rect x="13.5" y="7" width="2" height="2" fill="#fff"/></svg>
<svg class="r" style="left:1956px;top:236px" width="16" height="16"><circle cx="8" cy="8" r="6" fill="none" stroke="#fff" stroke-width="1.6"/><circle cx="8" cy="8" r="3.6" fill="none" stroke="#e8600a" stroke-width="1.2" stroke-dasharray="2,1"/><rect x="7" y="0.5" width="2" height="2" fill="#fff"/><rect x="7" y="13.5" width="2" height="2" fill="#fff"/><rect x="0.5" y="7" width="2" height="2" fill="#fff"/><rect x="13.5" y="7" width="2" height="2" fill="#fff"/></svg>
<svg class="r" style="left:1956px;top:284px" width="16" height="16"><circle cx="8" cy="8" r="6" fill="none" stroke="#fff" stroke-width="1.6"/><circle cx="8" cy="8" r="3.6" fill="none" stroke="#e8600a" stroke-width="1.2" stroke-dasharray="2,1"/><rect x="7" y="0.5" width="2" height="2" fill="#fff"/><rect x="7" y="13.5" width="2" height="2" fill="#fff"/><rect x="0.5" y="7" width="2" height="2" fill="#fff"/><rect x="13.5" y="7" width="2" height="2" fill="#fff"/></svg>
<div class="r" style="left:1533px;top:236px;width:24px;height:16px;background:#fff"></div>
<div class="r" style="left:1534px;top:237px;width:14px;height:14px;background:#ff9d42"></div>
<div class="r" style="left:1550px;top:237px;width:6px;height:14px;background:#ffe44d"></div>
<svg class="r" style="left:1537px;top:284px" width="16" height="16"><rect x="1" y="1" width="13" height="13" fill="none" stroke="#fff" stroke-width="1.6"/><line x1="1" y1="5" x2="14" y2="5" stroke="#fff" stroke-width="1.2"/><rect x="2.5" y="2" width="3" height="2.5" fill="#e8600a"/></svg>
<div class="r" style="left:1710px;top:347px;width:16px;height:16px;background:#1d1f23;border:1px solid #55595d;border-radius:2px"></div>
<div class="r" style="left:1528px;top:375px;width:452px;height:668px;background:#1b1d21;border:1px solid #5e6266"></div>
<div class="r" style="left:1529px;top:376px;width:450px;height:31px;background:#363b42;border-bottom:1px solid #5e6266"></div>
<div class="r" style="left:1748px;top:376px;width:1px;height:31px;background:#5e6266"></div>
<div class="r" style="left:1781px;top:376px;width:1px;height:31px;background:#5e6266"></div>
<svg class="r" style="left:1545px;top:411px" width="16" height="15"><polygon points="8,1 15,14 1,14" fill="none" stroke="#e8600a" stroke-width="1.3"/><line x1="8" y1="5" x2="8" y2="10" stroke="#e8600a" stroke-width="1.5"/><rect x="7.2" y="11.2" width="1.6" height="1.6" fill="#e8600a"/></svg>
<svg class="r" style="left:1757px;top:412px" width="16" height="12"><path d="M1,6 Q8,-1 15,6 Q8,13 1,6Z" fill="none" stroke="#fff" stroke-width="1.5"/><circle cx="8" cy="6" r="2.2" fill="#fff"/></svg>
<svg class="r" style="left:1872px;top:410px" width="16" height="17"><path d="M6,5 H2 V15 H11 V11" fill="none" stroke="#fff" stroke-width="1.5"/><circle cx="11" cy="5" r="3" fill="none" stroke="#e8600a" stroke-width="1.4" stroke-dasharray="1.6,0.8"/></svg>
<div class="r" style="left:1528px;top:1048px;width:457px;height:36px;background:#363b42;border:1px solid #5e6266;border-radius:3px"></div>
<div class="t" style="left:893.70px;top:60.25px;font-size:14px;line-height:14px;color:#dcdcdc;font-weight:normal; transform:scaleX(0.9588);transform-origin:0 0;">*Untitled - PrusaSlicer-2.7.4 based on Slic3r</div>
<div class="t" style="left:73.39px;top:88.35px;font-size:14px;line-height:14px;color:#e8e8e8;font-weight:normal; transform:scaleX(0.9094);transform-origin:0 0;">File</div>
<div class="t" style="left:112.66px;top:88.35px;font-size:14px;line-height:14px;color:#e8e8e8;font-weight:normal; transform:scaleX(0.9383);transform-origin:0 0;">Edit</div>
<div class="t" style="left:154.00px;top:88.35px;font-size:14px;line-height:14px;color:#e8e8e8;font-weight:normal; transform:scaleX(0.9688);transform-origin:0 0;">Window</div>
<div class="t" style="left:220.70px;top:88.35px;font-size:14px;line-height:14px;color:#e8e8e8;font-weight:normal; transform:scaleX(0.9264);transform-origin:0 0;">View</div>
<div class="t" style="left:267.40px;top:88.35px;font-size:14px;line-height:14px;color:#e8e8e8;font-weight:normal; transform:scaleX(1.0135);transform-origin:0 0;">Configuration</div>
<div class="t" style="left:368.38px;top:88.35px;font-size:14px;line-height:14px;color:#e8e8e8;font-weight:normal; transform:scaleX(1.0247);transform-origin:0 0;">Help</div>
<div class="t" style="left:71.41px;top:119.25px;font-size:14px;line-height:14px;color:#e8e8e8;font-weight:normal; transform:scaleX(0.9914);transform-origin:0 0;">Plater</div>
<div class="t" style="left:122.39px;top:119.25px;font-size:14px;line-height:14px;color:#e8e8e8;font-weight:normal; transform:scaleX(1.0065);transform-origin:0 0;">Print Settings</div>
<div class="t" style="left:219.31px;top:119.25px;font-size:14px;line-height:14px;color:#e8e8e8;font-weight:normal; transform:scaleX(0.9864);transform-origin:0 0;">Filament Settings</div>
<div class="t" style="left:339.28px;top:119.25px;font-size:14px;line-height:14px;color:#e8e8e8;font-weight:normal; transform:scaleX(1.0231);transform-origin:0 0;">Printer Settings</div>
<div class="t" style="left:1667.60px;top:146.35px;font-size:14px;line-height:14px;color:#7d8084;font-weight:normal; transform:scaleX(0.9161);transform-origin:0 0;">Simple</div>
<div class="t" style="left:1729.30px;top:146.35px;font-size:14px;line-height:14px;color:#7d8084;font-weight:normal; transform:scaleX(0.9775);transform-origin:0 0;">Advanced</div>
<div class="t" style="left:1811.70px;top:146.35px;font-size:14px;line-height:14px;color:#f0f0f0;font-weight:bold; transform:scaleX(0.9519);transform-origin:0 0;">Expert</div>
<div class="t" style="left:1527.58px;top:166.15px;font-size:14px;line-height:14px;color:#e8e8e8;font-weight:normal; transform:scaleX(1.0226);transform-origin:0 0;">Print settings:</div>
<div class="t" style="left:1527.60px;top:213.95px;font-size:14px;line-height:14px;color:#e8e8e8;font-weight:normal;">Filament:</div>
<div class="t" style="left:1527.53px;top:261.75px;font-size:14px;line-height:14px;color:#e8e8e8;font-weight:normal; transform:scaleX(1.0732);transform-origin:0 0;">Printer:</div>
<div class="t" style="left:1580.30px;top:189.95px;font-size:14px;line-height:14px;color:#e8e8e8;font-weight:normal; transform:scaleX(0.9800);transform-origin:0 0;">0.24 mm normal (0.6 mm nozzle) @DIY2 (modified)</div>
<div class="t" style="left:1579.43px;top:237.75px;font-size:14px;line-height:14px;color:#e8e8e8;font-weight:normal; transform:scaleX(0.8718);transform-origin:0 0;">PETG @BU</div>
<div class="t" style="left:1579.33px;top:285.55px;font-size:14px;line-height:14px;color:#e8e8e8;font-weight:normal; transform:scaleX(0.9681);transform-origin:0 0;">DIY2 (Creality Ender-3 Max 0.6 mm nozzle)</div>
<div class="t" style="left:1530.40px;top:319.15px;font-size:14px;line-height:14px;color:#e8e8e8;font-weight:normal; transform:scaleX(0.9876);transform-origin:0 0;">Supports:</div>
<div class="t" style="left:1597.30px;top:319.15px;font-size:14px;line-height:14px;color:#e8e8e8;font-weight:normal; transform:scaleX(0.9975);transform-origin:0 0;">None</div>
<div class="t" style="left:1529.29px;top:349.15px;font-size:14px;line-height:14px;color:#e8e8e8;font-weight:normal; transform:scaleX(1.1080);transform-origin:0 0;">Infill:</div>
<div class="t" style="left:1568.81px;top:349.15px;font-size:14px;line-height:14px;color:#e8e8e8;font-weight:normal; transform:scaleX(0.9935);transform-origin:0 0;">10%</div>
<div class="t" style="left:1672.34px;top:349.15px;font-size:14px;line-height:14px;color:#e8e8e8;font-weight:normal; transform:scaleX(1.0594);transform-origin:0 0;">Brim:</div>
<div class="t" style="left:1535.52px;top:385.15px;font-size:14px;line-height:14px;color:#e8e8e8;font-weight:normal; transform:scaleX(0.9765);transform-origin:0 0;">Name</div>
<div class="t" style="left:1858.70px;top:385.15px;font-size:14px;line-height:14px;color:#e8e8e8;font-weight:normal; transform:scaleX(1.0044);transform-origin:0 0;">Editing</div>
<div class="t" style="left:1564.43px;top:412.15px;font-size:14px;line-height:14px;color:#e8e8e8;font-weight:normal; transform:scaleX(0.9710);transform-origin:0 0;">USb storage-Body</div>
<div class="t" style="left:1726.00px;top:1059.35px;font-size:14px;line-height:14px;color:#e8e8e8;font-weight:bold; transform:scaleX(0.9431);transform-origin:0 0;">Slice now</div>
</body></html>
